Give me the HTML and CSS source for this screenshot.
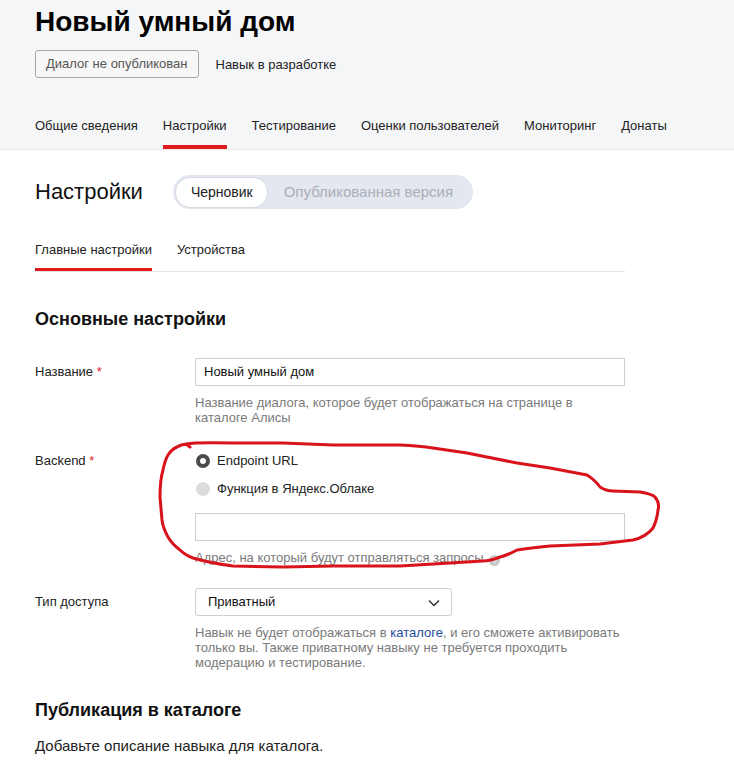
FILE: index.html
```html
<!DOCTYPE html>
<html lang="ru">
<head>
<meta charset="utf-8">
<title>Новый умный дом</title>
<link rel="stylesheet" href="styles.css">
</head>
<body>
<div class="page">
  <header class="head">
    <h1 class="title">Новый умный дом</h1>
    <div class="status">
      <span class="badge">Диалог не опубликован</span>
      <span class="state">Навык в разработке</span>
    </div>
    <nav class="tabs">
      <span class="tab">Общие сведения</span>
      <span class="tab tab-active">Настройки</span>
      <span class="tab">Тестирование</span>
      <span class="tab">Оценки пользователей</span>
      <span class="tab">Мониторинг</span>
      <span class="tab">Донаты</span>
    </nav>
  </header>

  <main class="content">
    <div class="settings-head">
      <h2 class="settings-title">Настройки</h2>
      <div class="switch">
        <span class="switch-item switch-active">Черновик</span>
        <span class="switch-item switch-off">Опубликованная версия</span>
      </div>
    </div>

    <nav class="subtabs">
      <span class="subtab subtab-active">Главные настройки</span>
      <span class="subtab">Устройства</span>
    </nav>

    <h3 class="section-title">Основные настройки</h3>

    <div class="field field-name">
      <div class="label">Название <span class="req">*</span></div>
      <div class="control">
        <div class="input">Новый умный дом</div>
        <p class="hint">Название диалога, которое будет отображаться на странице в каталоге Алисы</p>
      </div>
    </div>

    <div class="field field-backend">
      <div class="label label-radio">Backend <span class="req">*</span></div>
      <div class="control">
        <div class="radio"><span class="dot dot-on"></span>Endpoint URL</div>
        <div class="radio"><span class="dot"></span>Функция в Яндекс.Облаке</div>
        <div class="input input-url"></div>
        <p class="hint">Адрес, на который будут отправляться запросы <span class="qmark">?</span></p>
      </div>
    </div>

    <div class="field field-access">
      <div class="label">Тип доступа</div>
      <div class="control">
        <div class="select">Приватный
          <svg class="chev" width="12" height="8" viewBox="0 0 12 8"><path d="M1 1.5 L6 6.5 L11 1.5" fill="none" stroke="#333" stroke-width="1.5"/></svg>
        </div>
        <p class="hint">Навык не будет отображаться в <a class="link">каталоге</a>, и его сможете активировать только вы. Также приватному навыку не требуется проходить модерацию и тестирование.</p>
      </div>
    </div>

    <h3 class="section-title section-pub">Публикация в каталоге</h3>
    <p class="text">Добавьте описание навыка для каталога.</p>
  </main>

  <svg class="scribble" width="734" height="780" viewBox="0 0 734 780">
    <path d="M190 447 L186 444 Q196 442 233 443 L283 443 L333 445 L400 445 Q420 446 433 448 L467 453 L517 463 L550 468 L587 475 Q595 480 600 487 Q606 491 613 491 L640 492 Q652 494 655 497 Q660 503 658 510 Q657 520 653 528 Q646 537 633 540 L600 544 L550 546 Q530 548 517 550 Q508 555 500 557 Q490 561 483 561 L450 563 L400 566 L333 566 L283 567 L233 566 Q210 563 193 558 Q185 555 180 550 Q172 544 168 537 Q163 528 162 520 L160 497 Q160 480 163 470 Q165 460 168 455 Q172 449 177 447 Q182 444 188 444" fill="none" stroke="#d8131b" stroke-width="3" stroke-linejoin="round" stroke-linecap="round"/>
  </svg>
</div>
</body>
</html>
```

FILE: styles.css
```css
* { box-sizing: border-box; }

body {
  margin: 0;
  background: #fff;
  font-family: "Liberation Sans", Arial, sans-serif;
  color: #222;
  font-size: 13px;
}

.page {
  position: relative;
  width: 734px;
  min-height: 780px;
  overflow: hidden;
}

.head {
  background: #f5f6f8;
  border-bottom: 1px solid #e8e8e8;
  padding: 0 35px;
}

.title {
  margin: 0;
  padding-top: 5px;
  font-size: 28px;
  line-height: 34px;
  font-weight: bold;
  color: #000;
}

.status {
  display: flex;
  align-items: center;
  margin-top: 11px;
}

.badge {
  display: inline-block;
  height: 28px;
  line-height: 26px;
  padding: 0 10px;
  border: 1px solid #a6a6a6;
  border-radius: 3px;
  color: #555;
  background: #f7f7f7;
  white-space: nowrap;
}

.state {
  margin-left: 17px;
  color: #222;
}

.tabs {
  display: flex;
  margin-top: 39px;
}

.tab {
  flex: none;
  white-space: nowrap;
  line-height: 18px;
  padding-bottom: 10px;
  border-bottom: 4px solid transparent;
  margin-right: 25px;
  color: #222;
}

.tab-active { border-bottom-color: #e11b1b; }

.content {
  padding: 25px 35px 0;
}

.settings-head {
  display: flex;
  align-items: center;
}

.settings-title {
  margin: 0;
  font-size: 22px;
  font-weight: normal;
  line-height: 28px;
  color: #111;
}

.switch {
  display: flex;
  align-items: center;
  margin-left: 30px;
  height: 34px;
  padding: 0 2px;
  background: #e3e7ef;
  border-radius: 17px;
}

.switch-item {
  white-space: nowrap;
  line-height: 30px;
  border-radius: 15px;
}

.switch-off {
  font-size: 15px;
  padding: 0 18px 0 16px;
  color: #a9aeb9;
}

.switch-active {
  font-size: 14px;
  background: #fff;
  color: #222;
  border: 1px solid #d5d9e2;
  padding: 0 14px 0 15px;
  line-height: 29px;
}

.subtabs {
  display: flex;
  width: 590px;
  margin-top: 32px;
  border-bottom: 1px solid #e3e3e3;
}

.subtab {
  white-space: nowrap;
  line-height: 18px;
  padding-bottom: 9px;
  border-bottom: 3px solid transparent;
  margin-right: 25px;
}

.subtab-active { border-bottom-color: #e11b1b; }

.section-title {
  margin: 36px 0 0;
  font-size: 18px;
  line-height: 22px;
  font-weight: bold;
  color: #111;
}

.field {
  display: flex;
}

.field-name { margin-top: 28px; }
.field-backend { margin-top: 27px; }
.field-access { margin-top: 22px; }

.label {
  width: 160px;
  flex: none;
  line-height: 28px;
}

.label-radio { line-height: 18px; }

.req { color: #e0262b; }

.control {
  width: 430px;
}

.input {
  height: 28px;
  border: 1px solid #cfcfcf;
  padding: 0 8px;
  line-height: 26px;
  color: #111;
}

.input-url { margin-top: 15px; }

.hint {
  margin: 9px 0 0;
  font-size: 13px;
  line-height: 15px;
  color: #7a7a7a;
}

.radio {
  display: flex;
  align-items: center;
  line-height: 18px;
  height: 18px;
}

.radio + .radio { margin-top: 10px; }

.dot {
  width: 14px;
  height: 14px;
  border-radius: 50%;
  background: #dcdcdc;
  margin: 0 7px 0 1px;
  flex: none;
}

.dot-on {
  background: #fff;
  border: 4px solid #4b4b4b;
}

.qmark {
  display: inline-block;
  width: 11px;
  height: 11px;
  border-radius: 50%;
  background: #c8c8c8;
  color: #fff;
  font-size: 9px;
  line-height: 11px;
  text-align: center;
  vertical-align: -1px;
  margin-left: 2px;
}

.select {
  position: relative;
  width: 257px;
  height: 28px;
  border: 1px solid #cfcfcf;
  border-radius: 3px;
  padding: 0 12px;
  line-height: 26px;
  color: #111;
}

.chev {
  position: absolute;
  right: 11px;
  top: 10px;
}

.link { color: #1f4b9c; text-decoration: none; }

.section-pub { margin-top: 29px; }

.text {
  margin: 15px 0 0;
  font-size: 15px;
  line-height: 20px;
  color: #222;
}

.scribble {
  position: absolute;
  left: 0;
  top: 0;
  pointer-events: none;
}
```
